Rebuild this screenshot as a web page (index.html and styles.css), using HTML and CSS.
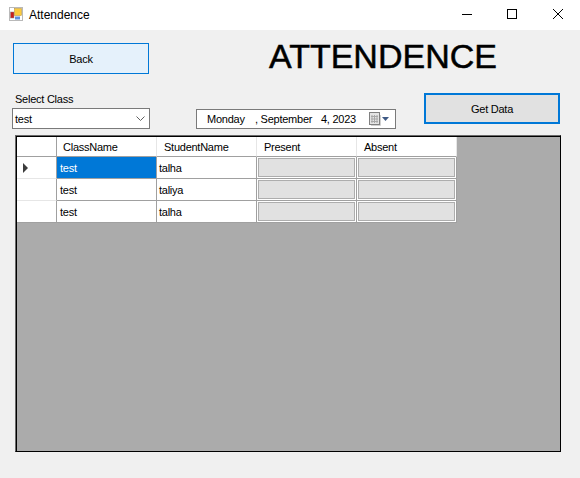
FILE: index.html
```html
<!DOCTYPE html>
<html>
<head>
    <title>Attendence</title>
    <link rel="stylesheet" href="styles.css">
</head>
<body>
  <div class="titlebar">
    <svg class="app-icon" width="16" height="16" viewBox="0 0 16 16">
      <rect x="0.5" y="0.5" width="13" height="13" fill="#fff" stroke="#b9b9b9"/>
      <rect x="1.500" y="5" width="3.500" height="6" fill="#c9201c" stroke="#8a8a8a" stroke-width="0.5"/>
      <rect x="5.500" y="1.500" width="7" height="7" fill="#fccb3c" stroke="#b08a30" stroke-width="0.5"/>
      <rect x="6" y="9.500" width="5" height="3" fill="#5f92dd"/>
    </svg>
    <span class="title-text">Attendence</span>
    <div class="window-buttons">
      <svg width="46" height="30" viewBox="0 0 46 30"><path d="M20 14.5h10" stroke="#000" fill="none"/></svg>
      <svg width="46" height="30" viewBox="0 0 46 30"><rect x="19.5" y="9.5" width="9" height="9" stroke="#000" fill="none"/></svg>
      <svg width="46" height="30" viewBox="0 0 46 30"><path d="M19 9l10 10M29 9l-10 10" stroke="#000" fill="none"/></svg>
    </div>
  </div>

  <div class="form">
    <div class="top">
      <div class="left-col">
        <button class="btn btn-back">Back</button>
        <label class="class-label">Select Class</label>
        <div class="combo">
          <span>test</span>
          <svg width="9" height="5" viewBox="0 0 9 5"><path d="M0.500 0.500l4 4 4-4" stroke="#606060" fill="none"/></svg>
        </div>
      </div>
      <h1 class="heading">ATTENDENCE</h1>
      <div class="date-picker">
        <span class="date-day">Monday</span>
        <span class="date-month">, September</span>
        <span class="date-num">4, 2023</span>
        <svg class="cal-icon" width="12" height="14" viewBox="0 0 12 14">
          <rect x="0.5" y="0.5" width="10" height="12" fill="#e4e4e4" stroke="#808080"/>
          <path d="M3 3v8M5.500 3v8M8 3v8M2 4.500h7M2 7h7M2 9.500h7" stroke="#a8a8a8" fill="none"/>
          <path d="M11.500 3v10.500H2" stroke="#d0d0d0" fill="none"/>
        </svg>
        <svg class="cal-arrow" width="7" height="4" viewBox="0 0 7 4"><path d="M0 0h7L3.500 4z" fill="#3f5a85"/></svg>
      </div>
      <button class="btn btn-data">Get Data</button>
    </div>

    <div class="grid-view">
      <table class="data-table">
        <thead>
          <tr>
            <th class="row-head"></th>
            <th>ClassName</th>
            <th>StudentName</th>
            <th>Present</th>
            <th>Absent</th>
          </tr>
        </thead>
        <tbody>
          <tr>
            <td class="row-head"><span class="current-row"></span></td>
            <td class="selected">test</td>
            <td>talha</td>
            <td class="btn-cell"><div></div></td>
            <td class="btn-cell"><div></div></td>
          </tr>
          <tr>
            <td class="row-head"></td>
            <td>test</td>
            <td>taliya</td>
            <td class="btn-cell"><div></div></td>
            <td class="btn-cell"><div></div></td>
          </tr>
          <tr>
            <td class="row-head"></td>
            <td>test</td>
            <td>talha</td>
            <td class="btn-cell"><div></div></td>
            <td class="btn-cell"><div></div></td>
          </tr>
        </tbody>
      </table>
    </div>
  </div>
</body>
</html>
```

FILE: styles.css
```css
* {
  box-sizing: border-box;
}

body {
  margin: 0;
  height: 478px;
  overflow: hidden;
  background-color: #f0f0f0;
  font-family: "Liberation Sans", Arial, sans-serif;
  font-size: 11px;
  letter-spacing: -0.25px;
  color: #000;
}

.titlebar {
  display: flex;
  align-items: center;
  height: 30px;
  background-color: #fff;
  padding-left: 9px;
}

.app-icon {
  margin-right: 4px;
}

.title-text {
  font-size: 12px;
  letter-spacing: 0;
}

.window-buttons {
  display: flex;
  margin-left: auto;
}

.form {
  padding: 13px 19px 0 12px;
}

.top {
  display: grid;
  grid-template-columns: 138px 200px 136px;
  grid-template-rows: 50px 36px;
  justify-content: start;
}

.left-col {
  grid-row: 1 / 3;
  display: flex;
  flex-direction: column;
  width: 138px;
}

.btn {
  font: inherit;
  letter-spacing: inherit;
  color: #000;
  padding: 0;
  cursor: pointer;
}

.btn-back {
  width: 136px;
  height: 31px;
  margin-left: 1px;
  border: 1px solid #0078d7;
  background-color: #e5f1fb;
}

.class-label {
  margin: 19px 0 2px 3px;
  line-height: 13px;
  height: 13px;
}

.combo {
  display: flex;
  align-items: center;
  justify-content: space-between;
  height: 21px;
  padding: 0 4px 0 2px;
  border: 1px solid #7a7a7a;
  background-color: #fff;
}

.heading {
  grid-column: 2 / 4;
  grid-row: 1;
  margin: 0 0 0 119px;
  font-size: 34px;
  line-height: 26px;
  font-weight: normal;
  letter-spacing: 0;
  white-space: nowrap;
  -webkit-text-stroke: 0.5px #000;
}

.date-picker {
  grid-column: 2;
  grid-row: 2;
  align-self: end;
  display: flex;
  align-items: center;
  width: 200px;
  height: 20px;
  margin-left: 46px;
  padding-left: 10px;
  border: 1px solid #7a7a7a;
  background-color: #fff;
  white-space: nowrap;
}

.date-day {
  width: 48px;
}

.date-month {
  width: 66px;
}

.date-num {
  width: 48px;
}

.cal-arrow {
  margin-left: 1px;
}

.btn-data {
  grid-column: 3;
  grid-row: 2;
  align-self: start;
  width: 136px;
  height: 31px;
  margin-left: 74px;
  border: 2px solid #0078d7;
  background-color: #e1e1e1;
}

.grid-view {
  width: 546px;
  height: 317px;
  margin: 6px 0 0 3px;
  border: 1px solid #000;
  border-top-color: #696969;
  border-left-color: #696969;
  box-shadow: inset 1px 1px 0 #000;
  padding: 1px 0 0 1px;
  background-color: #ababab;
}

.data-table {
  border-collapse: separate;
  border-spacing: 0;
  table-layout: fixed;
  width: 440px;
}

.data-table th {
  height: 20px;
  width: 100px;
  padding: 0 0 0 7px;
  font-weight: normal;
  text-align: left;
  background-color: #fff;
  border-right: 1px solid #e6e6e6;
  border-bottom: 1px solid #a0a0a0;
}

.data-table th:nth-child(2) {
  padding-left: 6px;
}

.data-table th.row-head {
  width: 40px;
  border-right-color: #a0a0a0;
}

.data-table td {
  height: 22px;
  padding: 0 0 0 2px;
  background-color: #fff;
  border-right: 1px solid #a0a0a0;
  border-bottom: 1px solid #a0a0a0;
}

.data-table td:nth-child(2) {
  padding-left: 3px;
}

.data-table td.row-head {
  padding: 0 0 0 6px;
  border-bottom-color: #e6e6e6;
}

.data-table tr:last-child td.row-head {
  border-bottom-color: #a0a0a0;
}

.current-row {
  display: block;
  width: 0;
  height: 0;
  border-left: 5px solid #3c3c3c;
  border-top: 5px solid transparent;
  border-bottom: 5px solid transparent;
}

.data-table td.selected {
  background-color: #0078d7;
  color: #fff;
}

.data-table td.btn-cell {
  padding: 1px;
}

.btn-cell div {
  height: 19px;
  border: 1px solid #adadad;
  background-color: #e1e1e1;
}
```
